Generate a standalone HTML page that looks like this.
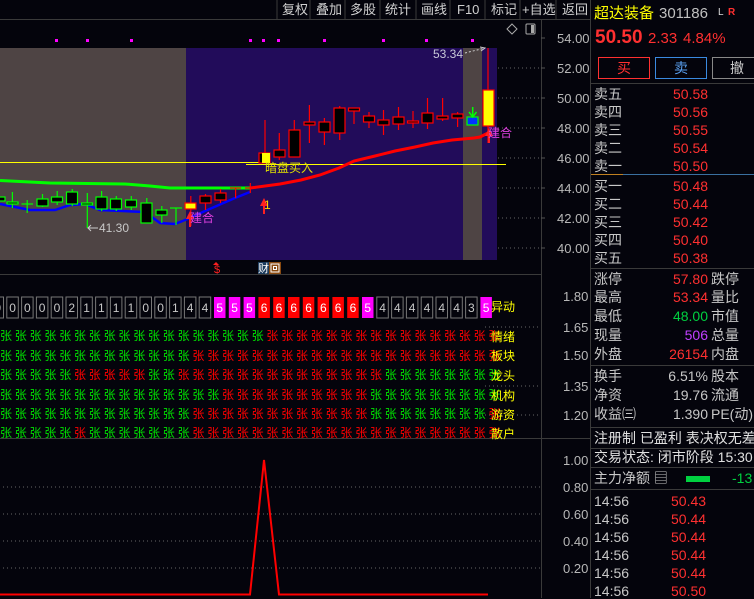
<!DOCTYPE html>
<html><head><meta charset="utf-8"><style>
*{margin:0;padding:0;box-sizing:border-box}
body{width:754px;height:598px;background:#04040c;overflow:hidden;position:relative;font-family:"Liberation Sans","Noto Sans CJK SC",sans-serif}
svg{position:absolute;left:0;top:0}
.r{position:absolute;left:591px;width:163px;font-size:14px;color:#c8c8c8;white-space:nowrap}
.t{position:absolute;white-space:nowrap;line-height:16px}
.red{color:#ff3030}.grn{color:#00d040}
.hl{position:absolute;left:591px;width:163px;height:1px;background:#3a3a3a}
</style></head><body>
<svg width="754" height="598" xmlns="http://www.w3.org/2000/svg" font-family="Liberation Sans, Noto Sans CJK SC, sans-serif">
<!-- toolbar -->
<line x1="0" y1="19.5" x2="590" y2="19.5" stroke="#3a3a3a"/>
<g fill="#d0d0d0" font-size="13">
<text x="282" y="14">复权</text><text x="316" y="14">叠加</text><text x="350" y="14">多股</text><text x="385" y="14">统计</text><text x="421" y="14">画线</text><text x="457" y="14">F10</text><text x="491" y="14">标记</text><text x="522" y="14">+自选</text><text x="562" y="14">返回</text>
</g>
<g stroke="#3a3a3a"><line x1="277" y1="0" x2="277" y2="19"/><line x1="310" y1="0" x2="310" y2="19"/><line x1="345" y1="0" x2="345" y2="19"/><line x1="380" y1="0" x2="380" y2="19"/><line x1="416" y1="0" x2="416" y2="19"/><line x1="450" y1="0" x2="450" y2="19"/><line x1="485" y1="0" x2="485" y2="19"/><line x1="520" y1="0" x2="520" y2="19"/><line x1="556" y1="0" x2="556" y2="19"/></g>
<line x1="590.5" y1="0" x2="590.5" y2="598" stroke="#3a3a3a"/>
<line x1="541.5" y1="20" x2="541.5" y2="598" stroke="#3a3a3a"/>
<!-- icons -->
<path d="M512 24 L517 29 L512 34 L507 29 Z" fill="none" stroke="#aaa"/>
<rect x="526" y="24" width="9" height="10" fill="none" stroke="#aaa" rx="1"/><rect x="531" y="25" width="3" height="8" fill="#aaa"/>
<!-- backgrounds -->
<rect x="0" y="48" width="186" height="212" fill="#4e4444"/>
<rect x="186" y="48" width="277" height="212" fill="#220c5a"/>
<rect x="463" y="48" width="19" height="212" fill="#4e4444"/>
<rect x="482" y="48" width="15" height="212" fill="#220c5a"/>
<!-- magenta dots -->
<g fill="#ff00ff"><rect x="55" y="39" width="3" height="3"/><rect x="86" y="39" width="3" height="3"/><rect x="130" y="39" width="3" height="3"/><rect x="249" y="39" width="3" height="3"/><rect x="262" y="39" width="3" height="3"/><rect x="277" y="39" width="3" height="3"/><rect x="323" y="39" width="3" height="3"/><rect x="382" y="39" width="3" height="3"/><rect x="425" y="39" width="3" height="3"/><rect x="471" y="39" width="3" height="3"/></g>
<!-- grid dotted -->
<g stroke="#666" stroke-dasharray="1 3"><line x1="498" y1="68" x2="541" y2="68"/><line x1="498" y1="98" x2="541" y2="98"/><line x1="498" y1="128" x2="541" y2="128"/><line x1="498" y1="158" x2="541" y2="158"/><line x1="498" y1="188" x2="541" y2="188"/><line x1="498" y1="218" x2="541" y2="218"/><line x1="498" y1="248" x2="541" y2="248"/></g>
<!-- axis labels -->
<g fill="#b8b8b8" font-size="13"><text x="557" y="43">54.00</text><text x="557" y="73">52.00</text><text x="557" y="103">50.00</text><text x="557" y="133">48.00</text><text x="557" y="163">46.00</text><text x="557" y="193">44.00</text><text x="557" y="223">42.00</text><text x="557" y="253">40.00</text>
<text x="563" y="301">1.80</text><text x="563" y="332">1.65</text><text x="563" y="360">1.50</text><text x="563" y="391">1.35</text><text x="563" y="420">1.20</text>
<text x="563" y="465">1.00</text><text x="563" y="492">0.80</text><text x="563" y="519">0.60</text><text x="563" y="546">0.40</text><text x="563" y="573">0.20</text></g>
<g stroke="#555"><line x1="541" y1="38" x2="545" y2="38"/><line x1="541" y1="68" x2="545" y2="68"/><line x1="541" y1="98" x2="545" y2="98"/><line x1="541" y1="128" x2="545" y2="128"/><line x1="541" y1="158" x2="545" y2="158"/><line x1="541" y1="188" x2="545" y2="188"/><line x1="541" y1="218" x2="545" y2="218"/><line x1="541" y1="248" x2="545" y2="248"/></g>
<!-- yellow lines -->
<line x1="0" y1="162.5" x2="265" y2="162.5" stroke="#ffff00"/>
<line x1="246" y1="164.5" x2="506" y2="164.5" stroke="#ffff00"/>
<!-- MA lines -->
<polyline points="0,180.5 20,181.5 50,183 125,184 150,186 170,188 250,188" fill="none" stroke="#00ff00" stroke-width="3"/>
<polyline points="250,188 280,184 301,180 320,175 339,168 354,161 375,156 395,151 415,147 433,143 452,140 474,138 480,137 488,133" fill="none" stroke="#ff0000" stroke-width="3"/>
<polyline points="0,204 20,208 30,210 55,210 70,205 85,204 100,210 145,212 160,223 175,224 190,218 205,211 235,198 250,192" fill="none" stroke="#0000ff" stroke-width="2.5"/>
<!-- candles -->
<g stroke-width="1.2" fill="#000">
<g stroke="#00ff00">
<rect x="-3" y="197" width="8" height="4"/>
<line x1="12.4" y1="192" x2="12.4" y2="208"/><rect x="7" y="202" width="11" height="2"/>
<line x1="27.2" y1="200" x2="27.2" y2="213"/><line x1="21.5" y1="204" x2="33" y2="204"/>
<line x1="42.5" y1="194" x2="42.5" y2="207"/><rect x="37" y="199" width="11" height="7"/>
<line x1="57.2" y1="191" x2="57.2" y2="205"/><rect x="51.5" y="197" width="11" height="5"/>
<line x1="72.3" y1="189" x2="72.3" y2="206"/><rect x="66.5" y="192" width="11" height="12"/>
<line x1="87.3" y1="193" x2="87.3" y2="228"/><rect x="81.5" y="203" width="11" height="2"/>
<line x1="101.6" y1="191" x2="101.6" y2="211"/><rect x="96" y="197" width="11" height="12"/>
<line x1="116.3" y1="196" x2="116.3" y2="211"/><rect x="110.5" y="199" width="11" height="10"/>
<line x1="131.3" y1="196" x2="131.3" y2="210"/><rect x="125.5" y="200" width="11" height="7"/>
<line x1="146.8" y1="198" x2="146.8" y2="223"/><rect x="141" y="203" width="11" height="20"/>
<line x1="161.8" y1="206" x2="161.8" y2="223"/><rect x="156" y="210" width="11" height="5"/>
<line x1="176" y1="208" x2="176" y2="225"/><line x1="170" y1="208" x2="182" y2="208"/>
</g>
<line x1="190.8" y1="196" x2="190.8" y2="226" stroke="#ff0000"/><rect x="185" y="203" width="11" height="6" fill="#ffff00" stroke="#ff0000"/>
<g stroke="#ff0000">
<line x1="205.5" y1="194" x2="205.5" y2="210"/><rect x="200" y="196" width="11" height="7"/>
<line x1="220.5" y1="189" x2="220.5" y2="203"/><rect x="215" y="193" width="11" height="7"/>
<line x1="235.6" y1="188" x2="235.6" y2="198"/><line x1="230" y1="188" x2="241" y2="188"/>
<line x1="250.3" y1="183" x2="250.3" y2="193"/><line x1="245" y1="188" x2="256" y2="188"/>
<line x1="265" y1="120" x2="265" y2="163"/><rect x="259" y="153" width="11" height="10"/>
<line x1="279.3" y1="133" x2="279.3" y2="160"/><rect x="274" y="150" width="11" height="7"/>
<line x1="294.3" y1="120" x2="294.3" y2="157"/><rect x="289" y="130" width="11" height="27"/>
<line x1="309.4" y1="105" x2="309.4" y2="143"/><rect x="304" y="122" width="11" height="3"/>
<line x1="324.4" y1="118" x2="324.4" y2="145"/><rect x="319" y="122" width="11" height="10"/>
<line x1="339.7" y1="106" x2="339.7" y2="140"/><rect x="334" y="108" width="11" height="25"/>
<line x1="354" y1="108" x2="354" y2="124"/><rect x="348.5" y="108" width="11" height="3"/>
<line x1="369" y1="112" x2="369" y2="128"/><rect x="363.5" y="116" width="11" height="6"/>
<line x1="383.5" y1="110" x2="383.5" y2="135"/><rect x="378" y="120" width="11" height="5"/>
<line x1="398.5" y1="107" x2="398.5" y2="130"/><rect x="393" y="117" width="11" height="7"/>
<line x1="413" y1="111" x2="413" y2="128"/><rect x="407.5" y="121" width="11" height="2"/>
<line x1="427.5" y1="98" x2="427.5" y2="129"/><rect x="422" y="113" width="11" height="10"/>
<line x1="442.6" y1="98" x2="442.6" y2="121"/><rect x="437" y="116" width="11" height="3"/>
<line x1="457.6" y1="112" x2="457.6" y2="127"/><rect x="452" y="114" width="11" height="4"/>
<line x1="488" y1="48" x2="488" y2="143"/>
</g>
<rect x="267" y="153" width="3" height="10" fill="#ffff00" stroke="none"/>
<rect x="262" y="153" width="7" height="10" fill="#ffff00" stroke="none"/>
<rect x="467" y="117" width="11" height="8" fill="#0033ff" stroke="#00ff00"/>
<line x1="472.7" y1="107" x2="472.7" y2="117" stroke="#00ff00" stroke-width="1.5"/><path d="M469 112 L472.7 117 L476.5 112" fill="none" stroke="#00ff00" stroke-width="1.5"/>
<rect x="483" y="90" width="11" height="36" fill="#ffff00" stroke="#ff0000"/>
</g>
<!-- annotations -->
<text x="433" y="58" fill="#c8c8d8" font-size="12">53.34</text>
<path d="M465 53 L485 48" stroke="#ccc" stroke-dasharray="2 2"/><path d="M480 47 L485 48 L481 51" fill="none" stroke="#ccc"/>
<text x="99" y="232" fill="#c8c8c8" font-size="12">41.30</text><path d="M88 228 L98 228 M91 225 L88 228 L91 231" stroke="#ccc" fill="none"/>
<path d="M190 211 L186 219 L194 219 Z" fill="#ff2020"/><line x1="190" y1="218" x2="190" y2="227" stroke="#ff2020" stroke-width="2"/>
<text x="190" y="222" fill="#e040e0" font-size="12">建合</text>
<path d="M264 198 L260 206 L268 206 Z" fill="#ff2020"/><line x1="264" y1="205" x2="264" y2="214" stroke="#ff2020" stroke-width="2"/>
<text x="264" y="209" fill="#ffd000" font-size="12">1</text>
<path d="M489 128 L485 136 L493 136 Z" fill="#ff2020"/><line x1="489" y1="135" x2="489" y2="143" stroke="#ff2020" stroke-width="2"/>
<text x="488" y="137" fill="#e040e0" font-size="12">建合</text>
<text x="265" y="172" fill="#e0e000" font-size="12">暗盘买入</text>
<text x="214" y="273" fill="#ff2020" font-size="11">$</text><path d="M216 262 L219 265 L213 265 Z" fill="#ff2020"/>
<rect x="258" y="262" width="11" height="12" fill="#1a3a5c"/><text x="258" y="272" fill="#fff" font-size="11">财</text>
<rect x="269" y="262" width="12" height="12" fill="#8a4a10"/><rect x="271" y="264" width="8" height="8" fill="none" stroke="#fff"/><rect x="273.5" y="266.5" width="3" height="3" fill="none" stroke="#fff"/>
<!-- panel separators -->
<line x1="0" y1="274.5" x2="541" y2="274.5" stroke="#3a3a3a"/>
<line x1="0" y1="438.5" x2="590" y2="438.5" stroke="#3a3a3a"/>
<!-- panel2 grid -->
<g stroke="#666" stroke-dasharray="1 3"><line x1="485" y1="327" x2="541" y2="327"/><line x1="485" y1="386" x2="541" y2="386"/><line x1="485" y1="415" x2="541" y2="415"/></g>
<g id="boxes" font-size="12" text-anchor="middle"></g>
<g id="zh" font-size="12"></g>
<g fill="#ffff00" font-size="12"><text x="491" y="311">异动</text><text x="491" y="341">情绪</text><text x="491" y="360">板块</text><text x="491" y="380">龙头</text><text x="491" y="400">机构</text><text x="491" y="419">游资</text><text x="491" y="438">散户</text></g>
<!-- panel3 -->
<g stroke="#666" stroke-dasharray="1 3"><line x1="3" y1="487" x2="541" y2="487"/><line x1="3" y1="514" x2="541" y2="514"/><line x1="3" y1="541" x2="541" y2="541"/><line x1="3" y1="568" x2="541" y2="568"/></g>
<polyline points="0,594.5 250,594.5 264,460 279,594.5 488,594.5" fill="none" stroke="#ff0000" stroke-width="2"/>
</svg>
<script>
(function(){
var ns="http://www.w3.org/2000/svg";
var vals=[0,0,0,0,0,2,1,1,1,1,0,0,1,4,4,5,5,5,6,6,6,6,6,6,6,5,4,4,4,4,4,4,3,5];
var g=document.getElementById("boxes");
for(var i=0;i<vals.length;i++){
 var x=-8+14.8*i,v=vals[i];
 var r=document.createElementNS(ns,"rect");
 r.setAttribute("x",x);r.setAttribute("y",297);r.setAttribute("width",11.5);r.setAttribute("height",21);
 r.setAttribute("fill",v==5?"#ff00ff":v==6?"#ff0000":"none");
 r.setAttribute("stroke",v>=5?"none":"#777");g.appendChild(r);
 var t=document.createElementNS(ns,"text");t.setAttribute("x",x+5.75);t.setAttribute("y",312);
 t.setAttribute("fill",v>=5?"#fff":"#c8c8c8");t.textContent=v;g.appendChild(t);
}
var G="#00e000",R="#ff0000";
function row(spec){var a=[];for(var i=0;i<34;i++)a.push(R);spec.forEach(function(s){for(var i=s[0];i<=s[1];i++)a[i]=G;});return a;}
var rows=[row([[0,17]]),row([[0,12]]),row([[0,4],[10,11],[26,33]]),row([[0,14],[25,33]]),row([[0,12],[25,32]]),row([[0,4],[6,12]])];
var ys=[340,360,379,399,418,437];
var z=document.getElementById("zh");
rows.forEach(function(a,ri){for(var i=0;i<34;i++){var t=document.createElementNS(ns,"text");t.setAttribute("x",i*14.8);t.setAttribute("y",ys[ri]);t.setAttribute("fill",a[i]);t.textContent="张";z.appendChild(t);}});
})();
</script>
<!-- right panel -->
<div class="r" style="top:0;height:598px">
<div class="t" style="left:3px;top:6px;color:#ffff00;font-size:15px">超达装备</div>
<div class="t" style="left:68px;top:6px;font-size:15px;color:#c0c0c0">301186</div>
<div class="t" style="left:127px;top:5px;font-size:10px;color:#ddd">L</div>
<div class="t" style="left:137px;top:5px;font-size:10px;color:#ff3030;font-weight:bold">R</div>
<div class="t red" style="left:4px;top:30px;font-size:19px;font-weight:bold">50.50</div>
<div class="t red" style="left:57px;top:31px;font-size:15px">2.33</div>
<div class="t red" style="left:92px;top:31px;font-size:15px">4.84%</div>
<div style="position:absolute;left:7px;top:57px;width:52px;height:22px;border:1px solid #ff3030;color:#ff3030;text-align:center;line-height:20px">买</div>
<div style="position:absolute;left:64px;top:57px;width:52px;height:22px;border:1px solid #3a8ae0;color:#5aa0f0;text-align:center;line-height:20px">卖</div>
<div style="position:absolute;left:121px;top:57px;width:50px;height:22px;border:1px solid #888;color:#ccc;text-align:center;line-height:20px">撤</div>
</div>
<div class="hl" style="top:83px"></div>
<div class="hl" style="top:174px;background:#3a70a0"></div><div class="hl" style="top:174px;width:32px;background:#c08020"></div>
<div class="hl" style="top:268px"></div>
<div class="hl" style="top:365px"></div>
<div class="hl" style="top:427px"></div>
<div class="hl" style="top:448px"></div>
<div class="hl" style="top:467px"></div>
<div class="hl" style="top:489px"></div>
<div class="r" style="top:0">
<div class="t" style="left:3px;top:86px">卖五</div><div class="t red" style="left:82px;top:86px">50.58</div>
<div class="t" style="left:3px;top:104px">卖四</div><div class="t red" style="left:82px;top:104px">50.56</div>
<div class="t" style="left:3px;top:122px">卖三</div><div class="t red" style="left:82px;top:122px">50.55</div>
<div class="t" style="left:3px;top:140px">卖二</div><div class="t red" style="left:82px;top:140px">50.54</div>
<div class="t" style="left:3px;top:158px">卖一</div><div class="t red" style="left:82px;top:158px">50.50</div>
<div class="t" style="left:3px;top:178px">买一</div><div class="t red" style="left:82px;top:178px">50.48</div>
<div class="t" style="left:3px;top:196px">买二</div><div class="t red" style="left:82px;top:196px">50.44</div>
<div class="t" style="left:3px;top:214px">买三</div><div class="t red" style="left:82px;top:214px">50.42</div>
<div class="t" style="left:3px;top:232px">买四</div><div class="t red" style="left:82px;top:232px">50.40</div>
<div class="t" style="left:3px;top:250px">买五</div><div class="t red" style="left:82px;top:250px">50.38</div>
<div class="t" style="left:3px;top:271px">涨停</div><div class="t red" style="right:46px;top:271px">57.80</div><div class="t" style="left:120px;top:271px">跌停</div>
<div class="t" style="left:3px;top:289px">最高</div><div class="t red" style="right:46px;top:289px">53.34</div><div class="t" style="left:120px;top:289px">量比</div>
<div class="t" style="left:3px;top:308px">最低</div><div class="t grn" style="right:46px;top:308px">48.00</div><div class="t" style="left:120px;top:308px">市值</div>
<div class="t" style="left:3px;top:327px">现量</div><div class="t" style="right:46px;top:327px;color:#c040ff">506</div><div class="t" style="left:120px;top:327px">总量</div>
<div class="t" style="left:3px;top:346px">外盘</div><div class="t red" style="right:46px;top:346px">26154</div><div class="t" style="left:120px;top:346px">内盘</div>
<div class="t" style="left:3px;top:368px">换手</div><div class="t" style="right:46px;top:368px">6.51%</div><div class="t" style="left:120px;top:368px">股本</div>
<div class="t" style="left:3px;top:387px">净资</div><div class="t" style="right:46px;top:387px">19.76</div><div class="t" style="left:120px;top:387px">流通</div>
<div class="t" style="left:3px;top:406px">收益㈢</div><div class="t" style="right:46px;top:406px">1.390</div><div class="t" style="left:120px;top:406px">PE(动)</div>
<div class="t" style="left:3px;top:430px;color:#e0e0e0">注册制 已盈利 表决权无差</div>
<div class="t" style="left:3px;top:449px;color:#e0e0e0">交易状态: 闭市阶段 15:30:</div>
<div class="t" style="left:3px;top:470px">主力净额 ▤</div>
<div style="position:absolute;left:95px;top:476px;width:24px;height:6px;background:#00d040"></div>
<div class="t grn" style="left:141px;top:470px">-13</div>
<div class="t" style="left:3px;top:493px">14:56</div><div class="t red" style="left:80px;top:493px">50.43</div>
<div class="t" style="left:3px;top:511px">14:56</div><div class="t red" style="left:80px;top:511px">50.44</div>
<div class="t" style="left:3px;top:529px">14:56</div><div class="t red" style="left:80px;top:529px">50.44</div>
<div class="t" style="left:3px;top:547px">14:56</div><div class="t red" style="left:80px;top:547px">50.44</div>
<div class="t" style="left:3px;top:565px">14:56</div><div class="t red" style="left:80px;top:565px">50.44</div>
<div class="t" style="left:3px;top:583px">14:56</div><div class="t red" style="left:80px;top:583px">50.50</div>
</div>
</body></html>
